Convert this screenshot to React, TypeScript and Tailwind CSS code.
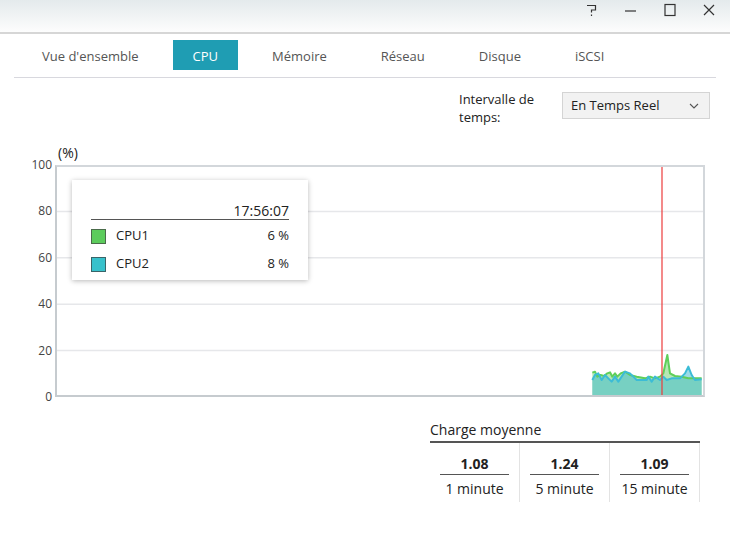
const FONT = { fontFamily: '"Open Sans", "Noto Sans", sans-serif' };

const tabs = ["Vue d'ensemble", "CPU", "Mémoire", "Réseau", "Disque", "iSCSI"];

// samples read off the reference (zoom space), mapped into plot space
const toPlot = (pts: number[][]) =>
  pts.map(([x, y]) => [580 + x / 3 - 55, 330 + y / 3 - 165]);

const cpu1 = toPlot([
  [37, 128], [45, 125], [52, 140], [62, 135], [72, 138], [82, 130], [90, 127], [97, 140],
  [105, 130], [112, 140], [122, 130], [135, 125], [150, 135], [170, 140], [195, 145],
  [210, 140], [225, 145], [240, 140], [250, 130], [262, 75], [270, 130], [285, 138],
  [305, 140], [325, 145], [345, 145], [365, 145],
]);
const cpu2 = toPlot([
  [37, 150], [45, 135], [55, 130], [65, 150], [75, 135], [85, 145], [95, 155], [105, 140],
  [115, 155], [125, 140], [135, 125], [150, 130], [160, 140], [170, 150], [200, 150],
  [205, 140], [215, 155], [225, 140], [240, 150], [250, 140], [260, 150], [275, 145],
  [300, 145], [315, 130], [325, 110], [335, 135], [345, 150], [365, 148],
]);

const line = (p: number[][]) => p.map((q) => q.join(",")).join(" ");
const area = (p: number[][]) =>
  `${p[0][0]},232 ${line(p)} ${p[p.length - 1][0]},232`;

function WindowButtons() {
  return (
    <div className="flex items-center gap-[21px] pr-[12px] pt-[3px] text-[#333]">
      <svg width="18" height="14" viewBox="0 0 18 14" fill="none" stroke="currentColor" strokeWidth="1.2">
        <path d="M4 2.5h8.5v4.5H8.5v2.5M8.5 11.5v1.5" />
      </svg>
      <svg width="18" height="14" viewBox="0 0 18 14" fill="none" stroke="currentColor" strokeWidth="1.2">
        <path d="M3 8h11" />
      </svg>
      <svg width="18" height="14" viewBox="0 0 18 14" fill="none" stroke="currentColor" strokeWidth="1.2">
        <rect x="4" y="1.5" width="10" height="11" />
      </svg>
      <svg width="18" height="14" viewBox="0 0 18 14" fill="none" stroke="currentColor" strokeWidth="1.2">
        <path d="M4 2l10 10M14 2L4 12" />
      </svg>
    </div>
  );
}

function Chart() {
  return (
    <div className="mt-[17px]">
      <div className="ml-[58px] h-[20px] text-[14px] leading-[20px] text-[#222]">(%)</div>
      <div className="-mt-[5px] flex">
        <div className="flex h-[246px] w-[52px] flex-col items-end justify-between text-[12px] leading-[14px] text-[#444]">
          {["100", "80", "60", "40", "20", "0"].map((l) => (
            <span key={l}>{l}</span>
          ))}
        </div>
        <div className="relative ml-[3px] mt-[7px] h-[232px] w-[650px] border-2 border-[#d3d7db] border-b-[#c6cbcf] border-l-[#c6cbcf]">
          <svg width="646" height="228" viewBox="2 2 646 228" className="block">
            {[46.4, 92.8, 139.2, 185.6].map((y) => (
              <line key={y} x1="0" x2="650" y1={y} y2={y} stroke="#e6e7ea" strokeWidth="1.5" />
            ))}
            <polygon points={area(cpu1)} fill="#5ccc5c" fillOpacity="0.45" />
            <polygon points={area(cpu2)} fill="#3ab8d0" fillOpacity="0.5" />
            <polyline points={line(cpu1)} fill="none" stroke="#5fcf5a" strokeWidth="2" strokeLinejoin="round" />
            <polyline points={line(cpu2)} fill="none" stroke="#3cbcd6" strokeWidth="2" strokeLinejoin="round" />
            <line x1="607" x2="607" y1="0" y2="232" stroke="#ec3b3b" strokeWidth="1.2" />
          </svg>
          <div className="absolute left-[15px] top-[13px] w-[236px] bg-white px-[19px] pb-[2px] pt-[22px] text-[13px] text-[#222] shadow-[0_1px_5px_rgba(0,0,0,0.28)]">
            <div className="border-b border-[#555] text-right text-[14px] leading-[17px]">17:56:07</div>
            <div className="pt-[2px]">
              <div className="flex h-[28px] items-center">
                <span className="h-[15px] w-[15px] border border-[#4a6b4a] bg-[#5ccc5c]" />
                <span className="ml-[10px] flex-1">CPU1</span>
                <span>6 %</span>
              </div>
              <div className="flex h-[28px] items-center">
                <span className="h-[15px] w-[15px] border border-[#3a6468] bg-[#37c1cb]" />
                <span className="ml-[10px] flex-1">CPU2</span>
                <span>8 %</span>
              </div>
            </div>
          </div>
        </div>
      </div>
    </div>
  );
}

function LoadAverage() {
  const cols = [
    { v: "1.08", l: "1 minute" },
    { v: "1.24", l: "5 minute" },
    { v: "1.09", l: "15 minute" },
  ];
  return (
    <div className="ml-[430px] mt-[16px] w-[270px] text-[#222]">
      <div className="border-b-2 border-[#555] pb-[2px] text-[14px] leading-[19px]">Charge moyenne</div>
      <div className="grid grid-cols-3">
        {cols.map((c) => (
          <div key={c.l} className="border-r border-[#e3e3e3] px-[10px] pb-[4px] pt-[12px] text-center">
            <div className="border-b border-[#555] pb-[1px] text-[14px] font-bold leading-[18px]">{c.v}</div>
            <div className="mt-[5px] text-[14px] leading-[18px]">{c.l}</div>
          </div>
        ))}
      </div>
    </div>
  );
}

export default function App() {
  return (
    <div className="h-[533px] w-[730px] overflow-hidden bg-white" style={FONT}>
      <div className="flex h-[34px] items-start justify-end border-b-2 border-[#d6d6d6] bg-gradient-to-b from-[#e4eaec] to-[#fdfdfd]">
        <WindowButtons />
      </div>
      <div className="ml-[22px] mt-[6px] flex gap-[14px] text-[13px] text-[#555]">
        {tabs.map((t) => (
          <div
            key={t}
            className={
              t === "CPU"
                ? "flex h-[30px] items-center bg-[#1f9db3] px-5 pt-[3px] text-white"
                : "flex h-[30px] items-center px-5 pt-[3px]"
            }
          >
            {t}
          </div>
        ))}
      </div>
      <div className="mx-[14px] mt-[7px] h-px bg-[#d8d8de]" />

      <div className="mt-[14px] flex justify-end pr-[20px]">
        <div className="mr-[13px] mt-[-2px] w-[90px] text-[13px] leading-[18px] text-[#222]">
          Intervalle de temps:
        </div>
        <div className="flex h-[27px] w-[148px] items-center justify-between border border-[#d4d4d4] bg-[#f2f2f2] pl-[8px] pr-[10px] text-[13px] text-[#222]">
          <span>En Temps Reel</span>
          <svg width="10" height="6" viewBox="0 0 10 6" fill="none" stroke="#555" strokeWidth="1.1">
            <path d="M1 1l4 4 4-4" />
          </svg>
        </div>
      </div>

      <Chart />
      <LoadAverage />
    </div>
  );
}
